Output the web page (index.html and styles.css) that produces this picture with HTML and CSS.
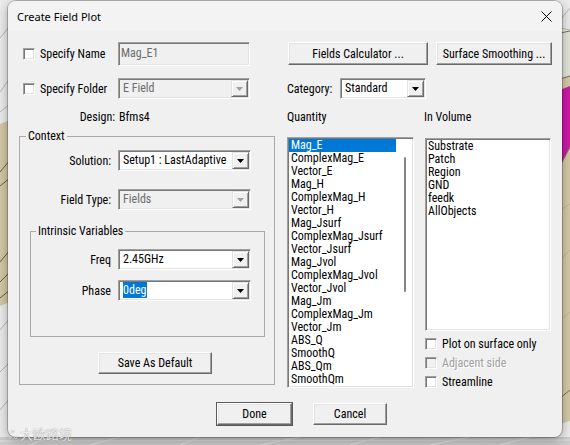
FILE: index.html
```html
<!DOCTYPE html>
<html>
<head>
<meta charset="utf-8">
<title>Create Field Plot</title>
<link rel="stylesheet" href="styles.css">
</head>
<body>
<div class="desktop">
  <svg class="canvas" width="570" height="445" viewBox="0 0 570 445">
    <rect width="570" height="445" fill="#ececec"/>
    <rect x="0" y="437" width="570" height="8" fill="#cbcbcb"/>
    <g stroke="#b8b8b8" stroke-width="1" fill="none">
      <path d="M0 38 L10 26 M0 92 L10 78 M0 112 L10 104 M0 330 L10 318 M0 372 L10 362 M0 410 L10 398"/>
      <path d="M560 20 L570 8 M560 28 L570 30"/>
    </g>
    <g stroke="#e2e2e2" stroke-width="1" fill="none">
      <path d="M30 445 L50 437 M90 445 L120 437 M180 445 L200 437 M260 445 L300 437 M350 445 L380 437 M430 445 L470 437 M500 445 L530 437 M0 441 L570 440"/>
    </g>
    <path d="M0 124 L10 120 L10 302 L0 306 Z" fill="#d4c8a6"/>
    <g stroke="#6a5f48" stroke-width="1" fill="none">
      <path d="M0 172 L10 160 M0 186 L10 178 M0 262 L10 250 M0 282 L10 272 M0 298 L10 290"/>
    </g>
    <path d="M560 33 L570 31 L570 76 L560 79 Z" fill="#e4e6dc"/>
    <path d="M560 79 L570 76 L570 89 L560 92 Z" fill="#d6cba9"/>
    <path d="M560 90 L570 86 L570 147 L560 166 Z" fill="#cd1aa8"/>
    <path d="M560 166 L570 147 L570 421 L560 424 Z" fill="#d6cba9"/>
    <g stroke="#7a6e55" stroke-width="1" fill="none">
      <path d="M560 33 L570 31 M560 79 L570 76 M560 166 L570 147 M560 398 L570 390"/>
    </g>
    <g stroke="#c2b897" stroke-width="1" fill="none">
      <path d="M560 210 L570 204 M560 260 L570 250 M560 320 L570 312"/>
    </g>
  </svg>

  <div class="watermark"><span class="wm-logo">ஃ</span><span>大欧路境</span></div>

  <div class="dialog">
    <div class="titlebar">
      <span class="title">Create Field Plot</span>
      <svg class="close" width="11" height="11" viewBox="0 0 11 11">
        <path d="M0.5 0.5 L10.5 10.5 M10.5 0.5 L0.5 10.5" stroke="#000" stroke-width="1" fill="none"/>
      </svg>
    </div>

    <div class="body">
      <div class="main">
        <div class="left">
          <div class="row r-name">
            <div class="chk"><span class="cb"></span><span>Specify Name</span></div>
            <div class="field disabled">Mag_E1</div>
          </div>
          <div class="row r-folder">
            <div class="chk"><span class="cb"></span><span>Specify Folder</span></div>
            <div class="combo disabled w132"><span class="combo-text">E Field</span><span class="combo-btn"><svg width="7" height="4" viewBox="0 0 7 4"><path d="M0 0 H7 L3.5 4 Z"/></svg></span></div>
          </div>
          <div class="row r-design">
            <span class="lbl-design">Design:</span>
            <span class="val-design">Bfms4</span>
          </div>

          <fieldset class="group context">
            <legend>Context</legend>
            <div class="row r-sol">
              <span class="flabel">Solution:</span>
              <div class="combo w133"><span class="combo-text">Setup1 : LastAdaptive</span><span class="combo-btn"><svg width="7" height="4" viewBox="0 0 7 4"><path d="M0 0 H7 L3.5 4 Z"/></svg></span></div>
            </div>
            <div class="row r-ft">
              <span class="flabel">Field Type:</span>
              <div class="combo disabled w133"><span class="combo-text">Fields</span><span class="combo-btn"><svg width="7" height="4" viewBox="0 0 7 4"><path d="M0 0 H7 L3.5 4 Z"/></svg></span></div>
            </div>

            <fieldset class="group intr">
              <legend>Intrinsic Variables</legend>
              <div class="row r-freq">
                <span class="flabel">Freq</span>
                <div class="combo w133"><span class="combo-text">2.45GHz</span><span class="combo-btn"><svg width="7" height="4" viewBox="0 0 7 4"><path d="M0 0 H7 L3.5 4 Z"/></svg></span></div>
              </div>
              <div class="row r-phase">
                <span class="flabel">Phase</span>
                <div class="combo w133"><span class="combo-text"><span class="sel">0deg</span></span><span class="combo-btn"><svg width="7" height="4" viewBox="0 0 7 4"><path d="M0 0 H7 L3.5 4 Z"/></svg></span></div>
              </div>
            </fieldset>

            <div class="btn save">Save As Default</div>
          </fieldset>
        </div>

        <div class="right">
          <div class="row r-btns">
            <div class="btn b-calc">Fields Calculator ...</div>
            <div class="btn b-smooth">Surface Smoothing ...</div>
          </div>
          <div class="row r-cat">
            <span class="lbl-cat">Category:</span>
            <div class="combo w86"><span class="combo-text">Standard</span><span class="combo-btn"><svg width="7" height="4" viewBox="0 0 7 4"><path d="M0 0 H7 L3.5 4 Z"/></svg></span></div>
          </div>
          <div class="row r-heads">
            <span class="h-q">Quantity</span>
            <span>In Volume</span>
          </div>
          <div class="lists">
            <div class="list qlist">
              <div class="item selected">Mag_E</div>
              <div class="item">ComplexMag_E</div>
              <div class="item">Vector_E</div>
              <div class="item">Mag_H</div>
              <div class="item">ComplexMag_H</div>
              <div class="item">Vector_H</div>
              <div class="item">Mag_Jsurf</div>
              <div class="item">ComplexMag_Jsurf</div>
              <div class="item">Vector_Jsurf</div>
              <div class="item">Mag_Jvol</div>
              <div class="item">ComplexMag_Jvol</div>
              <div class="item">Vector_Jvol</div>
              <div class="item">Mag_Jm</div>
              <div class="item">ComplexMag_Jm</div>
              <div class="item">Vector_Jm</div>
              <div class="item">ABS_Q</div>
              <div class="item">SmoothQ</div>
              <div class="item">ABS_Qm</div>
              <div class="item">SmoothQm</div>
              <div class="thumb"></div>
            </div>
            <div class="vcol">
              <div class="list vlist">
                <div class="item">Substrate</div>
                <div class="item">Patch</div>
                <div class="item">Region</div>
                <div class="item">GND</div>
                <div class="item">feedk</div>
                <div class="item">AllObjects</div>
              </div>
              <div class="opts">
                <div class="opt"><span class="cb"></span><span>Plot on surface only</span></div>
                <div class="opt off"><span class="cb"></span><span>Adjacent side</span></div>
                <div class="opt"><span class="cb"></span><span>Streamline</span></div>
              </div>
            </div>
          </div>
        </div>
      </div>

      <div class="footer">
        <div class="btn b-done">Done</div>
        <div class="btn b-cancel">Cancel</div>
      </div>
    </div>
  </div>
</div>
</body>
</html>
```

FILE: styles.css
```css
html, body {
  margin: 0;
  padding: 0;
}

body {
  width: 570px;
  height: 445px;
  overflow: hidden;
  background: #ececec;
}

.desktop {
  position: relative;
  width: 570px;
  height: 445px;
  overflow: hidden;
}

.canvas {
  position: absolute;
  left: 0;
  top: 0;
  display: block;
}

.watermark {
  position: absolute;
  left: 8px;
  top: 426px;
  display: flex;
  align-items: center;
  gap: 3px;
  font-family: "Noto Sans CJK SC", sans-serif;
  font-size: 13px;
  line-height: 16px;
  color: rgba(255, 255, 255, 0.85);
  text-shadow: 0 0 1px rgba(90, 90, 90, 0.8);
  z-index: 2;
}

.wm-logo {
  font-size: 12px;
}

.dialog {
  position: absolute;
  left: 8px;
  top: 1px;
  width: 554px;
  height: 436px;
  background: #f0f0f0;
  border-radius: 8px;
  box-shadow: 0 0 0 1px rgba(0, 0, 0, 0.22), 0 3px 12px rgba(0, 0, 0, 0.35);
  font-family: "Roboto Condensed", "Roboto", "Liberation Sans", sans-serif;
  font-stretch: condensed;
  font-size: 12px;
  line-height: 14px;
  color: #000;
  z-index: 1;
}

.titlebar {
  height: 30px;
  box-sizing: border-box;
  padding: 0 10px 0 9px;
  display: flex;
  align-items: center;
  justify-content: space-between;
  background: #f3f3f3;
  border-radius: 8px 8px 0 0;
}

.title {
  font-family: "Noto Sans", "Liberation Sans", sans-serif;
  font-stretch: normal;
  font-size: 11px;
  color: #000;
  padding-top: 1px;
}

.close {
  display: block;
}

.body {
  padding-top: 11px;
}

.main {
  display: flex;
  padding-left: 11px;
}

.left {
  width: 256px;
  display: flex;
  flex-direction: column;
}

.right {
  width: 265px;
  margin-left: 12px;
  display: flex;
  flex-direction: column;
}

.row {
  display: flex;
  align-items: center;
}

/* classic 3D borders */
.cb {
  display: block;
  flex: none;
  width: 12px;
  height: 12px;
  box-sizing: border-box;
  background: #fff;
  border: 1px solid;
  border-color: #a0a0a0 #fff #fff #a0a0a0;
  box-shadow: inset 1px 1px 0 #787878, inset -1px -1px 0 #e3e3e3;
}

.chk {
  width: 95px;
  display: flex;
  align-items: center;
  gap: 5px;
  white-space: nowrap;
}

.r-name {
  height: 24px;
  padding-left: 4px;
}

.r-folder {
  margin-top: 12px;
  height: 21px;
  padding-left: 4px;
}

.field {
  width: 132px;
  height: 24px;
  box-sizing: border-box;
  border: 1px solid;
  border-color: #a0a0a0 #fff #fff #a0a0a0;
  box-shadow: inset 1px 1px 0 #787878, inset -1px -1px 0 #e3e3e3;
  padding: 3px 0 0 2px;
  background: #fff;
}

.field.disabled {
  background: #f0f0f0;
  color: #6d6d6d;
}

.combo {
  display: flex;
  height: 21px;
  box-sizing: border-box;
  border: 1px solid;
  border-color: #a0a0a0 #fff #fff #a0a0a0;
  box-shadow: inset 1px 1px 0 #787878, inset -1px -1px 0 #e3e3e3;
  padding: 1px;
  background: #fff;
}

.combo.disabled {
  background: #f0f0f0;
  color: #6d6d6d;
}

.w132 { width: 132px; }
.w133 { width: 133px; }
.w86 { width: 86px; }

.combo-text {
  flex: 1;
  padding-left: 3px;
  line-height: 17px;
  white-space: nowrap;
  overflow: hidden;
}

.combo-btn {
  flex: none;
  width: 17px;
  box-sizing: border-box;
  border: 1px solid;
  border-color: #e3e3e3 #696969 #696969 #e3e3e3;
  box-shadow: inset 1px 1px 0 #fff, inset -1px -1px 0 #a0a0a0;
  background: #f0f0f0;
  display: flex;
  align-items: center;
  justify-content: center;
}

.combo-btn svg {
  display: block;
  fill: #000;
}

.combo.disabled .combo-btn svg {
  fill: #a0a0a0;
}

.sel {
  background: #0078d7;
  color: #fff;
  padding: 1px 1px 1px 0;
}

.r-design {
  margin-top: 9px;
  height: 18px;
}

.lbl-design {
  width: 96px;
  text-align: right;
}

.val-design {
  margin-left: 4px;
}

/* group boxes */
.group {
  margin: 0;
  min-width: 0;
  box-sizing: border-box;
  border: 1px solid #a9a9a9;
}

.group legend {
  padding: 0 2px;
  margin-left: 6px;
  line-height: 14px;
}

.context {
  margin-top: 3px;
  width: 256px;
  padding: 7px 0 10px 0;
}

.flabel {
  width: 91px;
  margin-right: 7px;
  text-align: right;
  white-space: nowrap;
}

.r-sol {
  height: 21px;
}

.r-ft {
  margin-top: 18px;
  height: 21px;
}

.intr {
  margin: 14px 0 0 10px;
  width: 235px;
  padding: 11px 0 35px 0;
}

.intr legend {
  margin-left: 5px;
}

.intr .flabel {
  width: 80px;
}

.r-freq {
  height: 21px;
}

.r-phase {
  margin-top: 10px;
  height: 21px;
}

/* buttons */
.btn {
  box-sizing: border-box;
  display: flex;
  align-items: center;
  justify-content: center;
  background: #f0f0f0;
  border: 1px solid;
  border-color: #fff #696969 #696969 #fff;
  box-shadow: inset -1px -1px 0 #a0a0a0, inset 1px 1px 0 #e3e3e3;
  white-space: nowrap;
}

.save {
  margin: 15px 0 0 78px;
  width: 114px;
  height: 22px;
}

.r-btns {
  height: 23px;
  padding-left: 1px;
  gap: 8px;
}

.b-calc {
  width: 140px;
  height: 23px;
}

.b-smooth {
  width: 116px;
  height: 23px;
}

.r-cat {
  margin-top: 13px;
  height: 21px;
}

.lbl-cat {
  width: 53px;
}

.r-heads {
  margin-top: 9px;
  height: 18px;
}

.h-q {
  width: 137px;
}

.lists {
  margin-top: 11px;
  display: flex;
  align-items: flex-start;
  gap: 11px;
}

.list {
  position: relative;
  box-sizing: border-box;
  background: #fff;
  border: 1px solid;
  border-color: #a0a0a0 #fff #fff #a0a0a0;
  box-shadow: inset 1px 1px 0 #787878, inset -1px -1px 0 #e3e3e3;
  overflow: hidden;
}

.qlist {
  width: 127px;
  height: 251px;
  padding: 1px 17px 0 1px;
}

.item {
  height: 13px;
  line-height: 13px;
  padding-left: 2px;
  white-space: nowrap;
}

.item.selected {
  background: #0078d7;
  color: #fff;
}

.thumb {
  position: absolute;
  left: 116px;
  top: 19px;
  width: 2px;
  height: 135px;
  border-radius: 1px;
  background: #868686;
}

.vcol {
  width: 126px;
  margin-top: 1px;
}

.vlist {
  width: 126px;
  height: 193px;
  padding: 1px;
}

.vlist .item {
  padding-left: 1px;
}

.opts {
  margin-top: 3px;
}

.opt {
  height: 19px;
  display: flex;
  align-items: center;
  gap: 5px;
  white-space: nowrap;
}

.opt.off {
  color: #a0a0a0;
  text-shadow: 1px 1px 0 #fff;
}

.opt.off .cb {
  background: #f0f0f0;
}

.footer {
  display: flex;
  margin-top: 12px;
  padding-left: 209px;
  gap: 21px;
}

.b-done {
  width: 75px;
  height: 22px;
  box-shadow: 0 0 0 1px #5a5a5a, inset -1px -1px 0 #a0a0a0, inset 1px 1px 0 #e3e3e3;
}

.b-cancel {
  width: 74px;
  height: 22px;
}
```
